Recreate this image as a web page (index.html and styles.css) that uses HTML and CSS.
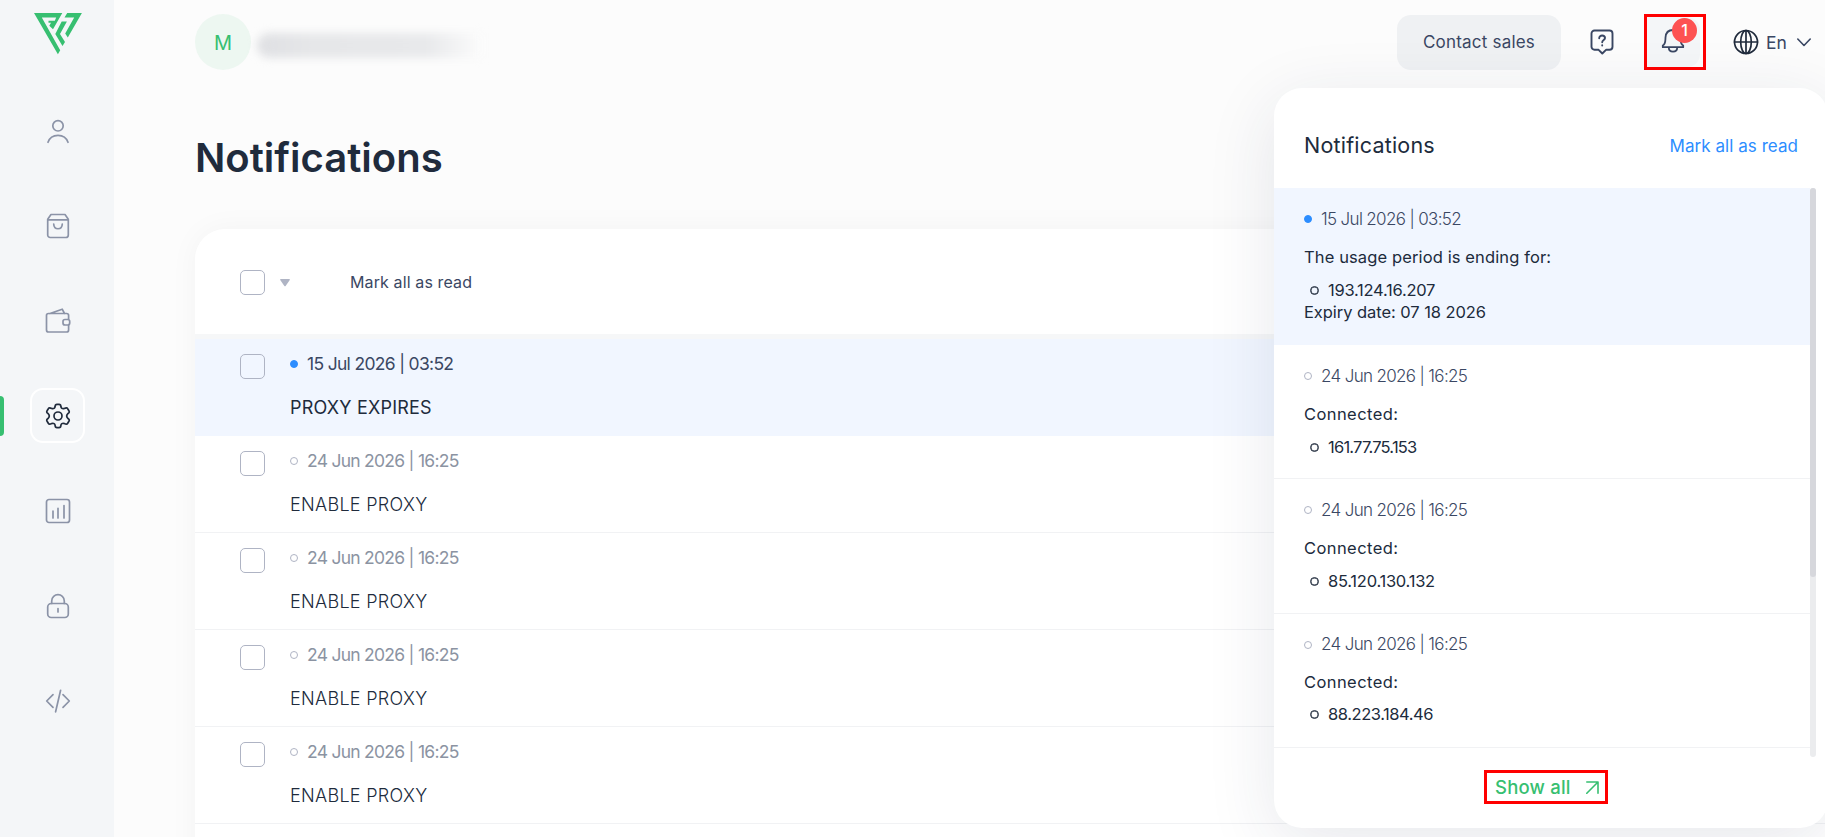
FILE: index.html
```html
<!DOCTYPE html>
<html lang="en">
<head>
<meta charset="utf-8">
<title>Notifications</title>
<link rel="stylesheet" href="styles.css">
</head>
<body>
<div class="app">
  <aside class="sidebar">
    <svg class="logo" width="48" height="42" viewBox="0 0 48 42"><path d="M0 0H28.300L19 16.300L15.300 12.800L17 9.800H14.500V7.800H20.800L22.200 4.600H7.800L26.200 37.300L23.900 41.300Z"/><path d="M33.200 0H47.900L33.800 24.600L31.200 20.600L40.200 4.600H30.500Z"/><path d="M27.700 8.500H32.900L26 21L31 29L28.500 33L21.300 21Z"/></svg>
    <nav class="menu">
      <a class="item"><svg width="26" height="26" viewBox="0 0 26 26"><circle cx="13" cy="7.800" r="5.200"/><path d="M3 24.300C4.600 19.500 8.400 17.300 13 17.300S21.400 19.500 23 24.300"/></svg></a>
      <a class="item"><svg width="26" height="26" viewBox="0 0 26 26"><path d="M2.700 6.200L6 1.500H20L23.300 6.200V22A2.500 2.500 0 0 1 20.800 24.500H5.200A2.500 2.500 0 0 1 2.700 22ZM2.700 6.800H23.300M8.700 11C9 17.300 17 17.300 17.300 11"/></svg></a>
      <a class="item"><svg width="26" height="26" viewBox="0 0 26 26"><path d="M23.600 11V7.500A2 2 0 0 0 21.600 5.500H3.500A2 2 0 0 0 1.500 7.500V22A2 2 0 0 0 3.500 24H21.600A2 2 0 0 0 23.600 22V17.500M5 5.500L17.200 1.200L19.500 5.500"/><rect x="18" y="11.500" width="6.700" height="5.500" rx="2"/></svg></a>
      <a class="item active"><svg width="26" height="26" viewBox="0 0 26 26"><path d="M10.200 3.200Q10.200 1.400 12 1.400H14Q15.800 1.400 15.800 3.200Q16.200 6.400 19.300 5.500Q21.800 4.100 22.700 5.700L23.900 7.700Q25 9.500 22.900 10.600Q20.500 13 22.900 15.400Q25 16.500 23.900 18.300L22.700 20.300Q21.800 21.900 19.300 20.500Q16.200 19.600 15.800 22.800Q15.800 24.600 14 24.600H12Q10.200 24.600 10.200 22.800Q9.800 19.600 6.700 20.500Q4.200 21.900 3.300 20.300L2.100 18.300Q1 16.500 3.100 15.400Q5.500 13 3.100 10.600Q1 9.500 2.100 7.700L3.300 5.700Q4.200 4.100 6.700 5.500Q9.800 6.400 10.200 3.200Z"/><circle cx="13" cy="13" r="4"/></svg></a>
      <a class="item"><svg width="26" height="26" viewBox="0 0 26 26"><rect x="1.500" y="1.500" width="23" height="23" rx="2.500"/><path d="M8 13V20M13 10.300V20M19 7.500V20"/></svg></a>
      <a class="item"><svg width="26" height="26" viewBox="0 0 26 26"><rect x="2.700" y="10.500" width="20.600" height="14" rx="3.500"/><path d="M6.700 10.500V8C6.700-.4 19.300-.4 19.300 8V10.500M13 15.500V19"/></svg></a>
      <a class="item"><svg width="26" height="26" viewBox="0 0 26 26"><path d="M8 6.700L1.700 13L8 19.300M18 6.700L24.300 13L18 19.300M15.600 2.300L10.600 23.800"/></svg></a>
    </nav>
  </aside>
  <main class="main">
    <header class="topbar">
      <div class="avatar">M</div>
      <div class="account"></div>
      <button class="sales"><span>Contact sales</span></button>
      <svg class="help" width="24" height="26" viewBox="0 0 24 26"><path d="M4.500 1.500H19.500A3 3 0 0 1 22.500 4.500V17.800A3 3 0 0 1 19.500 20.800H16L12.300 24.500L8.600 20.800H4.500A3 3 0 0 1 1.500 17.800V4.500A3 3 0 0 1 4.500 1.500Z"/><path d="M9.200 9.200C9.200 5.500 15 5.800 15 9C15 11 12.200 11 12.200 13.300M12.200 16.200V16.500"/></svg>
      <div class="bell-frame">
        <div class="bell"><svg width="24" height="27" viewBox="0 0 24 27"><path d="M1.800 18.500C4.800 17 4.300 13.500 4.500 10.500C4.800 5.500 7.500 3 12 3S19.200 5.500 19.500 10.500C19.700 13.500 19.200 17 22.200 18.500V20.200H1.800ZM7.800 20.500C7.800 26 16.200 26 16.200 20.500"/></svg><span class="badge">1</span></div>
      </div>
      <div class="language">
        <svg width="26" height="26" viewBox="0 0 26 26"><circle cx="13" cy="13" r="11.500"/><ellipse cx="13" cy="13" rx="5.300" ry="11.500"/><path d="M1.500 13H24.500M13 1.500V24.500"/></svg>
        <span class="lang-name">En</span>
        <svg class="chevron" width="14" height="9" viewBox="0 0 14 9"><path d="M.8 1L7 7.500L13.200 1"/></svg>
      </div>
    </header>
    <h1 class="title">Notifications</h1>
    <section class="card">
      <div class="card-head">
        <i class="check"></i>
        <svg class="caret" width="10" height="8" viewBox="0 0 10 8"><path d="M.8 0H9.200Q10.400 .2 9.600 1.300L5.800 6.700Q5 7.700 4.200 6.700L.4 1.300Q-.4 .2 .8 0Z"/></svg>
        <span class="mark">Mark all as read</span>
      </div>
      <div class="row unread"><i class="check"></i><div><div class="date"><i class="dot"></i><span>15 Jul 2026 | 03:52</span></div><div class="subject">PROXY EXPIRES</div></div></div>
      <div class="row"><i class="check"></i><div><div class="date"><i class="dot"></i><span>24 Jun 2026 | 16:25</span></div><div class="subject">ENABLE PROXY</div></div></div>
      <div class="row"><i class="check"></i><div><div class="date"><i class="dot"></i><span>24 Jun 2026 | 16:25</span></div><div class="subject">ENABLE PROXY</div></div></div>
      <div class="row"><i class="check"></i><div><div class="date"><i class="dot"></i><span>24 Jun 2026 | 16:25</span></div><div class="subject">ENABLE PROXY</div></div></div>
      <div class="row"><i class="check"></i><div><div class="date"><i class="dot"></i><span>24 Jun 2026 | 16:25</span></div><div class="subject">ENABLE PROXY</div></div></div>
      <div class="row"></div>
    </section>
  </main>
</div>
<section class="panel">
  <div class="panel-head"><h2>Notifications</h2><a>Mark all as read</a></div>
  <div class="list">
    <div class="items">
      <article class="note unread"><div class="when"><i class="dot"></i><span>15 Jul 2026 | 03:52</span></div><p class="usage">The usage period is ending for:</p><ul><li class="snug">193.124.16.207</li></ul><p class="expiry">Expiry date: 07 18 2026</p></article>
      <article class="note"><div class="when"><i class="dot"></i><span>24 Jun 2026 | 16:25</span></div><p class="connected">Connected:</p><ul><li class="tightest">161.77.75.153</li></ul></article>
      <article class="note"><div class="when"><i class="dot"></i><span>24 Jun 2026 | 16:25</span></div><p class="connected">Connected:</p><ul><li class="snug">85.120.130.132</li></ul></article>
      <article class="note"><div class="when"><i class="dot"></i><span>24 Jun 2026 | 16:25</span></div><p class="connected">Connected:</p><ul><li class="tight">88.223.184.46</li></ul></article>
    </div>
    <div class="scroll"><div class="thumb"></div></div>
  </div>
  <div class="panel-foot"><a class="show-all"><span>Show all</span><svg width="13" height="13" viewBox="0 0 13 13"><path d="M.8 1H12V12.200M12 1L.8 12.200"/></svg></a></div>
</section>
</body>
</html>
```

FILE: styles.css
```css
* { box-sizing: border-box; }
body { margin: 0; height: 837px; overflow: hidden; position: relative; background: #fcfcfc; color: #202b3c; font-family: Inter, "Liberation Sans", sans-serif; }
h1, h2, p, ul { margin: 0; padding: 0; font-weight: 400; }
svg { display: block; flex: none; fill: none; stroke-linecap: round; stroke-linejoin: round; }
.app { display: flex; height: 837px; overflow: hidden; }
.sidebar { width: 114px; flex: none; background: #f4f6f8; padding-top: 13px; }
.logo { margin-left: 34px; fill: #37bf71; }
.menu { margin-top: 48px; display: flex; flex-direction: column; gap: 40px; padding-left: 30px; }
.item { position: relative; width: 55px; height: 55px; border-radius: 13px; display: flex; align-items: center; justify-content: center; }
.item svg { stroke: #8b93a7; stroke-width: 1.7; margin-left: 1px; }
.item.active { border: 2px solid #fff; }
.item.active svg { stroke: #202b3c; }
.item.active::before { content: ""; position: absolute; left: -32px; top: 6px; width: 4px; height: 40px; background: #37bf71; border-radius: 0 4px 4px 0; }
.main { flex: 1; padding-left: 81px; }
.topbar { height: 70px; padding-top: 14px; display: flex; align-items: center; }
.avatar { width: 56px; height: 56px; padding-top: 1px; border-radius: 50%; background: #edf7f1; color: #37bf71; font-size: 20px; display: flex; align-items: center; justify-content: center; }
.account { width: 226px; height: 25px; margin: 7px 914px 0 6px; border-radius: 13px 0 0 13px; background: linear-gradient(90deg, #dfe0e3 0, #e6e7e9 25%, #e8e9eb 75%, #fcfcfc 100%); filter: blur(4px); }
.sales { width: 164px; height: 55px; border: 0; border-radius: 14px; background: #eff1f3; color: #3a4763; font: 400 17px Inter, sans-serif; letter-spacing: .2px; padding: 0; }
.help { margin: 0 30px 0 29px; stroke: #3a4763; stroke-width: 1.9; }
.bell-frame { width: 62px; height: 56px; border: 3px solid #f00; flex: none; }
.bell { position: relative; width: 53px; height: 50px; border-radius: 0 13px 13px 0; background: #f4f6f8; padding: 10px 0 0 14px; }
.bell svg { stroke: #3a4763; stroke-width: 1.8; }
.badge { position: absolute; left: 25px; top: 1px; width: 25px; height: 25px; border-radius: 50%; background: #fd5252; color: #fff; font-size: 16px; line-height: 25px; text-align: center; font-weight: 500; }
.language { display: flex; align-items: center; margin-left: 27px; stroke: #202b3c; stroke-width: 1.7; color: #3a4763; font-size: 17.5px; }
.lang-name { width: 31px; margin-left: 7px; }
.chevron { stroke: #3a4763; stroke-width: 1.6; }
.title { height: 48px; margin: 64px 0 47px; font-size: 40px; line-height: 48px; font-weight: 600; }
.card { width: 1700px; height: 700px; border-radius: 30px 30px 0 0; background: #fff; box-shadow: 0 0 30px rgba(32, 43, 60, .04); }
.card-head { height: 110px; border-bottom: 5px solid #f6f7f8; display: flex; align-items: center; padding: 2px 0 0 45px; }
.check { width: 25px; height: 25px; border: 1px solid #afb4c4; border-radius: 5px; flex: none; }
.caret { margin-left: 15px; fill: #afb4c4; }
.mark { margin: 0 0 2px 60px; font-size: 16px; letter-spacing: .12px; color: #3a4763; }
.row { height: 97px; border-bottom: 1px solid #f1f2f4; padding: 15px 0 0 45px; display: flex; gap: 25px; }
.row.unread { background: #f1f6ff; border-color: #f1f6ff; }
.dot { width: 8px; height: 8px; border-radius: 50%; border: 1px solid #afb4c4; flex: none; }
.unread .dot { background: #2c8dff; border-color: #2c8dff; }
.date { display: flex; align-items: center; gap: 9px; height: 22px; margin-top: -2px; font-size: 17.5px; letter-spacing: -.73px; color: #8b93a2; }
.date .dot { margin-top: 2px; }
.unread .date { color: #3a4763; letter-spacing: -.68px; }
.subject { font-size: 18px; line-height: 24px; margin-top: 22px; font-weight: 300; letter-spacing: .3px; }
.unread .subject { font-weight: 400; letter-spacing: .2px; }
.panel { position: absolute; left: 1274px; top: 88px; width: 554px; height: 740px; border-radius: 28px; background: #fff; box-shadow: 0 16px 70px rgba(32, 43, 80, .11); }
.panel-head { height: 100px; padding: 15px 30px 0; display: flex; align-items: center; justify-content: space-between; }
.panel-head h2 { font-size: 21.5px; letter-spacing: .2px; padding-bottom: 2px; }
.panel-head a { font-size: 17px; letter-spacing: .05px; color: #2c8dff; }
.list { display: flex; height: 569px; }
.items { width: 536px; height: 560px; overflow: hidden; }
.scroll { width: 6px; background: #ebecee; border-radius: 3px; }
.thumb { height: 389px; border-radius: 3px; background: #d6d7dc; }
.note { height: 134.3px; border-bottom: 1px solid #f1f2f4; padding: 19px 0 0 30px; font-weight: 300; font-size: 16.5px; line-height: 22px; }
.note:last-child { line-height: 21.5px; }
.note.unread { height: 157px; background: #f1f6ff; border: 0; font-weight: 400; }
.when { display: flex; align-items: center; gap: 9px; font-size: 17px; letter-spacing: -.66px; color: #3a4763; height: 24px; margin-bottom: 15px; font-weight: 300; }
.usage { letter-spacing: .12px; }
.expiry { letter-spacing: -.06px; }
.connected { letter-spacing: .42px; }
.note ul { margin: 11px 0 0 6px; list-style: none; }
.note li { display: flex; align-items: center; gap: 9px; }
.note li::before { content: ""; width: 7px; height: 7px; border: 1px solid #202b3c; box-shadow: inset 0 0 0 .5px #202b3c; border-radius: 50%; }
.snug { letter-spacing: -.25px; }
.tight { letter-spacing: -.43px; }
.tightest { letter-spacing: -.78px; }
.panel-foot { height: 71px; padding: 13px 0 0 210px; }
.show-all { width: 124px; height: 34px; border: 3px solid #f00; display: flex; align-items: center; padding-left: 8px; gap: 15px; color: #37bf71; font-size: 18.5px; letter-spacing: .2px; font-weight: 500; }
.show-all svg { stroke: #37bf71; stroke-width: 1.6; }
```
